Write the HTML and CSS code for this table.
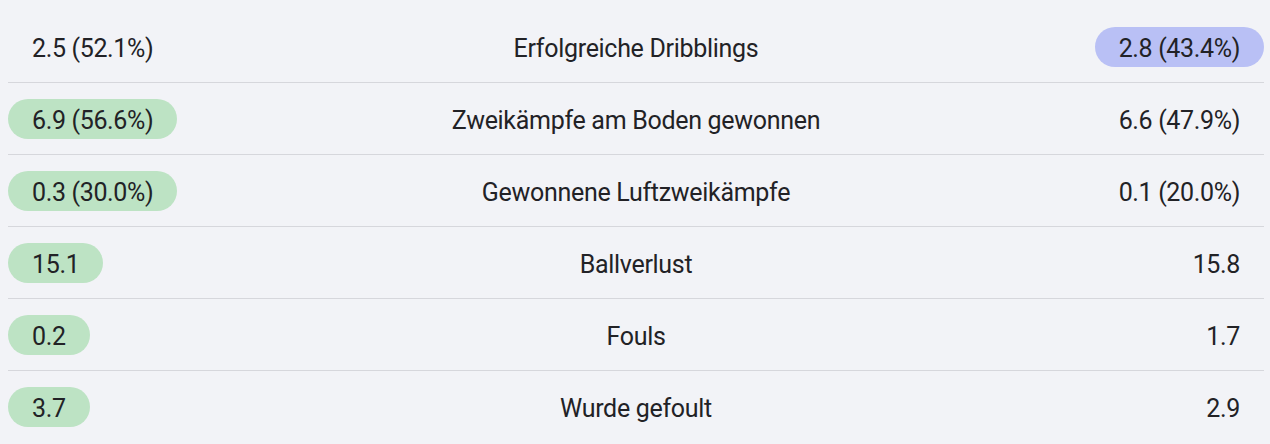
FILE: index.html
```html
<!DOCTYPE html>
<html lang="de">
<head>
<meta charset="utf-8">
<link rel="stylesheet" href="styles.css">
</head>
<body>
<div class="stats">
  <div class="row">
    <div class="val left"><span class="pill">2.5 (52.1%)</span></div>
    <div class="label">Erfolgreiche Dribblings</div>
    <div class="val right"><span class="pill blue">2.8 (43.4%)</span></div>
  </div>
  <div class="row">
    <div class="val left"><span class="pill green">6.9 (56.6%)</span></div>
    <div class="label">Zweikämpfe am Boden gewonnen</div>
    <div class="val right"><span class="pill">6.6 (47.9%)</span></div>
  </div>
  <div class="row">
    <div class="val left"><span class="pill green">0.3 (30.0%)</span></div>
    <div class="label">Gewonnene Luftzweikämpfe</div>
    <div class="val right"><span class="pill">0.1 (20.0%)</span></div>
  </div>
  <div class="row">
    <div class="val left"><span class="pill green">15.1</span></div>
    <div class="label">Ballverlust</div>
    <div class="val right"><span class="pill">15.8</span></div>
  </div>
  <div class="row">
    <div class="val left"><span class="pill green">0.2</span></div>
    <div class="label">Fouls</div>
    <div class="val right"><span class="pill">1.7</span></div>
  </div>
  <div class="row">
    <div class="val left"><span class="pill green">3.7</span></div>
    <div class="label">Wurde gefoult</div>
    <div class="val right"><span class="pill">2.9</span></div>
  </div>
</div>
</body>
</html>
```
FILE: styles.css
```css
html, body {
  margin: 0;
  padding: 0;
  background: #f2f3f7;
}
body {
  font-family: Roboto, "Liberation Sans", sans-serif;
  color: #222226;
  font-size: 25px;
}
.stats {
  padding: 11px 6px 0 8px;
  display: flex;
  flex-direction: column;
}
.row {
  display: grid;
  grid-template-columns: 1fr auto 1fr;
  align-items: center;
  padding: 16px 0 15px;
  border-bottom: 1px solid #d6d7dc;
}
.row:last-child {
  border-bottom: none;
}
.val {
  display: flex;
}
.val.right {
  justify-content: flex-end;
}
.label {
  text-align: center;
  letter-spacing: -0.3px;
  padding-top: 2px;
}
.pill {
  box-sizing: border-box;
  height: 40px;
  display: inline-flex;
  align-items: center;
  padding: 2px 24px 0;
  border-radius: 20px;
  letter-spacing: -0.35px;
}
.pill.green {
  background: #bde3c4;
}
.pill.blue {
  background: #b9c0f5;
}
```
